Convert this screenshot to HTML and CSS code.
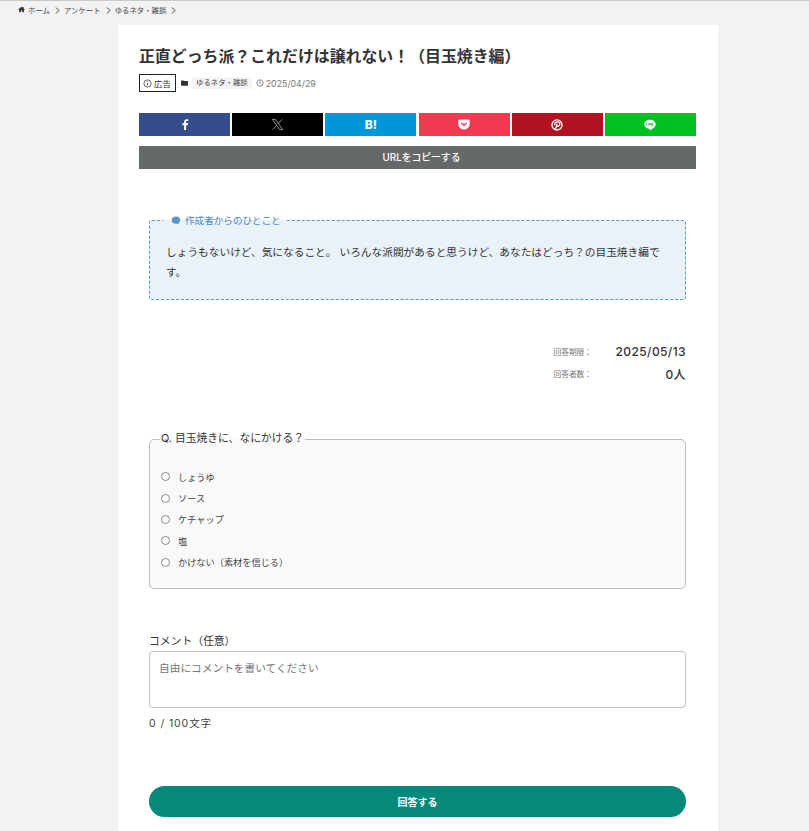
FILE: index.html
```html
<!DOCTYPE html>
<html lang="ja">
<head>
<meta charset="utf-8">
<title>正直どっち派？これだけは譲れない！（目玉焼き編）</title>
<link rel="stylesheet" href="styles.css">
</head>
<body>
<nav class="crumbs">
  <svg class="crumb-home" viewBox="0 0 16 16"><path d="M8 1.500 0.500 8.200l1 1L2.500 8.400V14.500h4V10.500h3V14.500h4V8.400l1 .8 1-1L13 5.800V2.500h-2v1.500z"/></svg>
  <span>ホーム</span><svg class="crumb-sep" viewBox="0 0 5 7"><path d="M1 .5l3 3-3 3"/></svg>
  <span>アンケート</span><svg class="crumb-sep" viewBox="0 0 5 7"><path d="M1 .5l3 3-3 3"/></svg>
  <span>ゆるネタ・雑談</span><svg class="crumb-sep" viewBox="0 0 5 7"><path d="M1 .5l3 3-3 3"/></svg>
</nav>
<main class="card">
  <h1 class="title">正直どっち派？これだけは譲れない！（目玉焼き編）</h1>
  <div class="meta">
    <span class="ad"><svg class="ad-icon" viewBox="0 0 12 12"><circle cx="6" cy="6" r="4.800"/><path d="M6 5.300v3.200M6 3.300v1"/></svg>広告</span>
    <svg class="folder" viewBox="0 0 12 10"><path d="M0 1.500C0 .9.400.5 1 .5h3l1.200 1.200H11c.6 0 1 .4 1 1v5.800c0 .6-.4 1-1 1H1c-.6 0-1-.4-1-1z"/></svg>
    <span class="cat">ゆるネタ・雑談</span>
    <svg class="clock" viewBox="0 0 12 12"><circle cx="6" cy="6" r="4.800"/><path d="M6 3v3.200l2 1.200"/></svg>
    <span class="date">2025/04/29</span>
  </div>
  <div class="share">
    <a class="sbtn fb"><svg viewBox="0 0 10 14" class="ico-f"><path d="M6.400 14V8h2.200l.4-2.500H6.400V4c0-.8.300-1.300 1.400-1.300H9.100V.4C8.800.3 8 .2 7.200.2 5.300.2 3.900 1.400 3.900 3.600v1.900H1.600V8h2.300v6z"/></svg></a>
    <a class="sbtn tw"><svg viewBox="0 0 24 24" class="ico-x"><path d="M2.500 2.500h5.600l13.400 19h-5.600zM20.500 2.500l-7.600 8.400M10.700 13.400 3 21.500"/></svg></a>
    <a class="sbtn hb"><span class="hb-text">B!</span></a>
    <a class="sbtn po"><svg viewBox="0 0 14 13" class="ico-p"><path d="M1.500 0.500h11c.7 0 1.200.5 1.200 1.200V6c0 3.700-3 6.500-6.700 6.500S.3 9.700.3 6V1.700C.3 1 .8.500 1.500.5z"/><path class="po-v" d="M4 4.700l3 2.900 3-2.900"/></svg></a>
    <a class="sbtn pi"><svg viewBox="0 0 14 14" class="ico-pi"><circle cx="7" cy="7" r="5.900"/><path d="M5.300 12.500 7 5.500M4.500 7.400C3.500 5 5.200 3.300 7.300 3.300c2 0 3.100 1.300 3 2.800C10.100 8.300 7.700 9.300 6.400 7.900"/></svg></a>
    <a class="sbtn li"><svg viewBox="0 0 16 15" class="ico-l"><path d="M8 .5C3.800.5.400 3.200.400 6.500c0 3 2.700 5.500 6.300 6 .3.100.6.200.7.400v.9c0 .3-.2 1 .8.500 1-.4 5.200-3 6.100-4.500.8-.9 1.300-1.900 1.300-2.800C15.600 3.200 12.200.5 8 .5z"/><path class="li-t" d="M3.600 5v3h1.500M6.200 5v3M7.600 8V5l2 3V5M12.300 5h-1.500v3h1.500M10.800 6.500h1.300"/></svg></a>
  </div>
  <a class="copy">URLをコピーする</a>
  <div class="content">
    <section class="note">
      <h2 class="note-head"><svg class="bubble" viewBox="0 0 12 11"><path d="M6 .5C2.900.5.700 2.400.700 5s2.200 4.500 5.300 4.500c.5 0 1 0 1.400-.2.700.5 1.500.7 2.300.7-.4-.4-.7-.9-.8-1.300C10.400 7.800 11.300 6.500 11.300 5 11.300 2.400 9.100.5 6 .5z"/></svg>作成者からのひとこと</h2>
      <p class="note-text">しょうもないけど、気になること。 いろんな派閥があると思うけど、あなたはどっち？の目玉焼き編です。</p>
    </section>
    <dl class="stats">
      <div class="stat"><dt>回答期限：</dt><dd>2025/05/13</dd></div>
      <div class="stat"><dt>回答者数：</dt><dd>0人</dd></div>
    </dl>
    <form class="form">
      <fieldset class="question">
        <legend>Q. 目玉焼きに、なにかける？</legend>
        <label class="opt"><input type="radio" name="q"><span>しょうゆ</span></label>
        <label class="opt"><input type="radio" name="q"><span>ソース</span></label>
        <label class="opt"><input type="radio" name="q"><span>ケチャップ</span></label>
        <label class="opt"><input type="radio" name="q"><span>塩</span></label>
        <label class="opt"><input type="radio" name="q"><span>かけない（素材を信じる）</span></label>
      </fieldset>
      <label class="c-label" for="c">コメント（任意）</label>
      <textarea class="c-area" id="c" placeholder="自由にコメントを書いてください"></textarea>
      <div class="count">0 / 100文字</div>
      <button class="submit" type="button">回答する</button>
    </form>
  </div>
</main>
</body>
</html>
```
FILE: styles.css
```css
* { box-sizing: border-box; }
html, body { margin: 0; height: 831px; overflow: hidden; }
body {
  background: #f2f2f2;
  border-top: 1px solid #c8c8c8;
  color: #333;
  font-family: Inter, "Noto Sans CJK JP", sans-serif;
}
.crumbs {
  display: flex;
  align-items: center;
  height: 24px;
  padding: 0 0 7px 18px;
  font-size: 7.400px;
  color: #444;
}
.crumb-home { width: 7px; height: 7px; fill: #333; margin-right: 3px; }
.crumb-sep { width: 5px; height: 7px; fill: none; stroke: #444; stroke-width: 1; margin: 1px 4px 0 5px; }
.card {
  width: 600px;
  height: 830px;
  margin-left: 118px;
  background: #fff;
  padding: 21px 22px 0 21px;
}
.title {
  margin: 0;
  font-size: 15.900px;
  line-height: 22px;
  font-weight: 700;
  color: #333;
}
.meta {
  display: flex;
  align-items: center;
  margin-top: 6px;
  height: 18px;
  font-size: 8.500px;
  color: #555;
}
.ad {
  display: flex;
  align-items: center;
  height: 18px;
  width: 37px;
  padding-left: 3px;
  border: 1px solid #222;
  color: #333;
}
.ad-icon { width: 9px; height: 9px; margin-right: 2px; fill: none; stroke: #333; stroke-width: 1; }
.folder { width: 7px; height: 6px; margin-left: 5px; fill: #333; }
.cat {
  margin-left: 4px;
  padding: 0 4px;
  line-height: 12px;
  background: #f5f5f5;
  font-size: 7.400px;
  color: #444;
}
.clock { width: 8px; height: 8px; margin-left: 4px; fill: none; stroke: #555; stroke-width: 1; }
.date { margin-left: 2px; font-size: 8.800px; color: #777; }
.share {
  display: grid;
  grid-template-columns: repeat(6, 91px);
  column-gap: 2.200px;
  margin-top: 21px;
}
.sbtn { display: flex; align-items: center; justify-content: center; height: 23px; }
.fb { background: #354d8c; }
.tw { background: #000; }
.hb { background: #0097d9; }
.po { background: #f03a50; }
.pi { background: #b21222; }
.li { background: #00c022; }
.ico-f { width: 8px; height: 11px; fill: #fff; }
.ico-x { width: 13px; height: 13px; fill: none; stroke: #ccc; stroke-width: 1.300; }
.hb-text { color: #fff; font-size: 12px; font-weight: 800; line-height: 1; }
.ico-p { width: 12px; height: 11px; fill: #fff; }
.po-v { fill: none; stroke: #f03a50; stroke-width: 1.800; }
.ico-pi { width: 12px; height: 12px; fill: none; stroke: #fff; stroke-width: 1.500; }
.ico-l { width: 12px; height: 12px; fill: #fff; }
.li-t { fill: none; stroke: #00a01c; stroke-width: .8; }
.copy {
  display: block;
  margin-top: 10px;
  height: 23px;
  line-height: 23px;
  width: 557px;
  padding-left: 8px;
  background: #666969;
  color: #fff;
  font-size: 9.800px;
  font-weight: 500;
  text-align: center;
}
.content { padding: 51px 10px 0; }
.note {
  position: relative;
  height: 80px;
  background: #e9f1f9;
  border: 1px dashed #5b94c6;
  border-radius: 3px;
  padding: 22px 16px 0;
}
.note-head {
  position: absolute;
  left: 13px;
  top: -8px;
  display: flex;
  align-items: center;
  margin: 0;
  padding: 0 6px 0 8px;
  height: 14px;
  font-size: 9.600px;
  font-weight: 400;
  color: #4d8ac0;
  background: linear-gradient(#fff 50%, #e9f1f9 50%);
}
.bubble { width: 10px; height: 9px; margin-right: 4px; fill: #5b94c6; }
.note-text { margin: 0; font-size: 10.700px; line-height: 20px; color: #333; }
.stats { margin: 40px 0 0; padding: 0; }
.stat { display: flex; justify-content: flex-end; align-items: center; height: 22px; }
.stat dt { font-size: 7.700px; color: #777; }
.stat dd { margin: 0; width: 94px; text-align: right; font-size: 12px; font-weight: 500; letter-spacing: .4px; color: #333; }
.form { margin-top: 48px; }
.question {
  margin: 0;
  height: 157px;
  padding: 20px 11px 0;
  background: #f9f9f9;
  border: 1px solid #bfbfbf;
  border-radius: 5px;
  min-width: 0;
}
.question legend { padding: 0 1px; margin-left: -1px; font-size: 10.800px; line-height: 14px; color: #333; }
.opt { display: flex; align-items: center; height: 21.400px; font-size: 9.200px; color: #444; }
.opt input {
  appearance: none;
  width: 9px;
  height: 9px;
  margin: 0 8px 0 0;
  border: 1px solid #888;
  border-radius: 50%;
  background: #fff;
}
.c-label { display: block; margin-top: 46px; font-size: 10.800px; line-height: 14px; color: #333; }
.c-area {
  display: block;
  width: 537px;
  height: 57px;
  margin-top: 2px;
  padding: 10px 9px;
  border: 1px solid #bfbfbf;
  border-radius: 4px;
  background: #fff;
  font: 10.700px/14px Inter, "Noto Sans CJK JP", sans-serif;
  resize: none;
}
.c-area::placeholder { color: #757575; opacity: 1; }
.count { margin-top: 9px; font-size: 10.500px; line-height: 14px; letter-spacing: .9px; color: #444; }
.submit {
  display: block;
  width: 537px;
  height: 31px;
  margin-top: 55px;
  border: 0;
  border-radius: 16px;
  background: #04897a;
  color: #fff;
  font: 700 10px Inter, "Noto Sans CJK JP", sans-serif;
}
```
